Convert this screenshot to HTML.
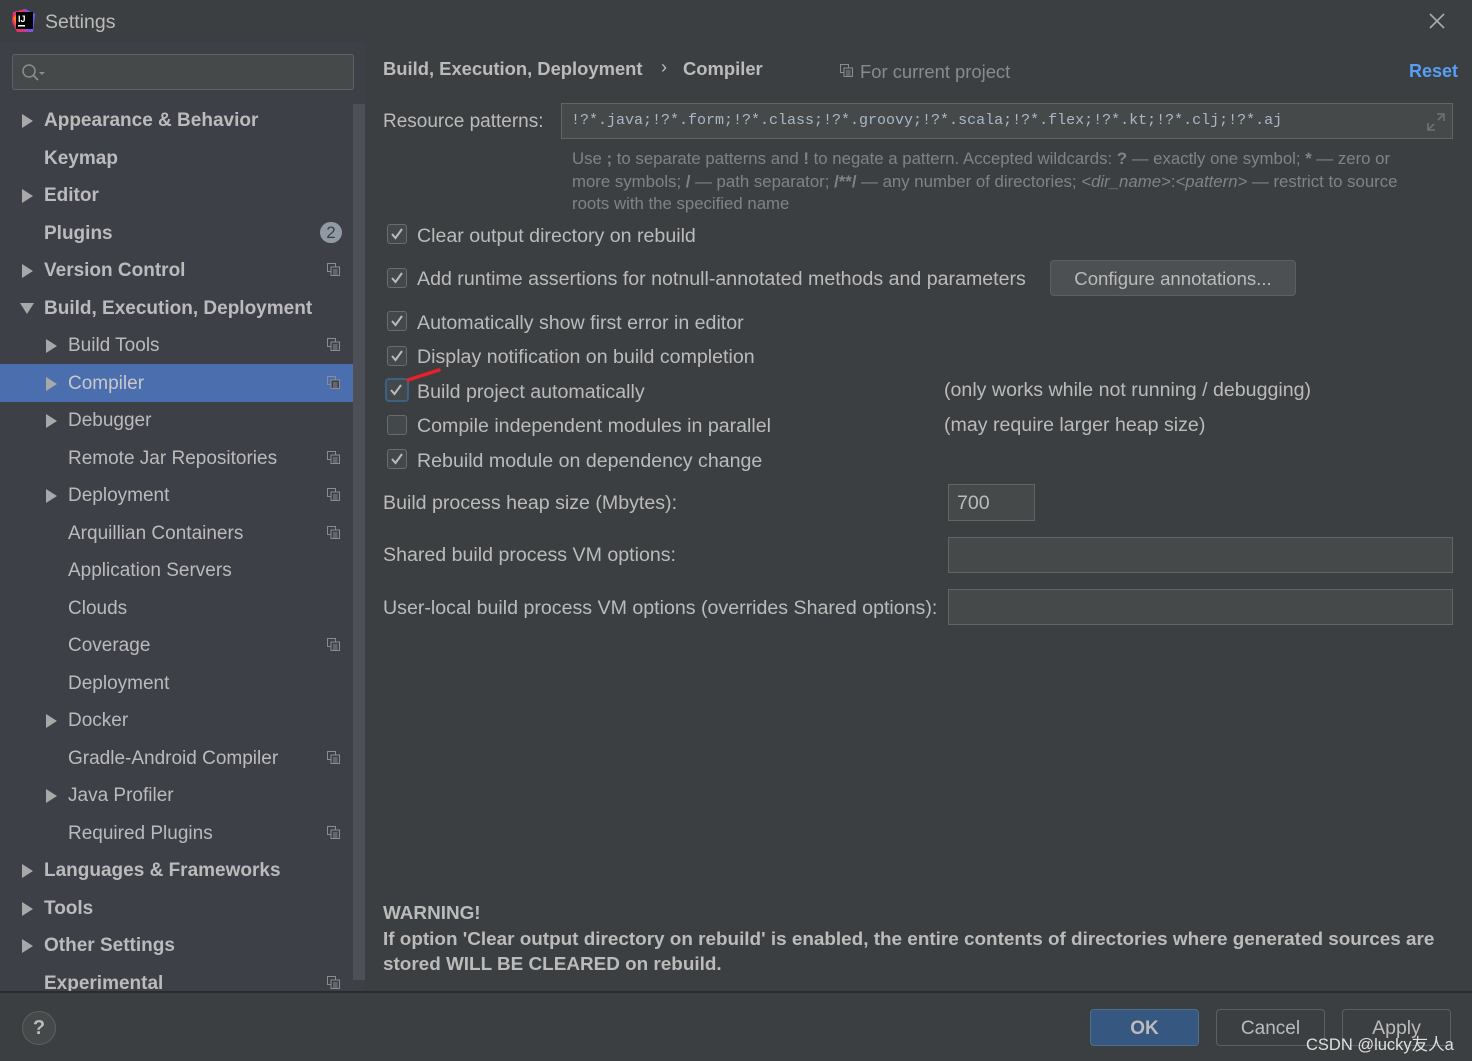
<!DOCTYPE html>
<html><head><meta charset="utf-8"><style>
*{margin:0;padding:0;box-sizing:border-box}
body{width:1472px;height:1061px;background:#3c3f41;font-family:"Liberation Sans","Noto Sans CJK SC",sans-serif;color:#bbbbbb;position:relative;overflow:hidden;font-size:18px}
.a{position:absolute;white-space:nowrap}
#side{position:absolute;left:0;top:42px;width:365px;height:950px;background:#3d4047;overflow:hidden}
.it{position:absolute;height:37px;line-height:39px;left:0;width:353px;font-size:19px}
.b{font-weight:bold}
.tri{position:absolute;top:13px;width:0;height:0;border-left:11px solid #a8a8a8;border-top:7px solid transparent;border-bottom:7px solid transparent}
.tri.d{border-left:7px solid transparent;border-right:7px solid transparent;border-top:11px solid #a8a8a8;border-bottom:0;top:14px}
.cb{position:absolute;width:20px;height:20px;border:1px solid #6b6b6b;border-radius:3px;background:#43494a}
.cb svg{position:absolute;left:2px;top:2px}
.inp{position:absolute;background:#45494a;border:1px solid #646464}
.btn{position:absolute;border:1px solid #5e6060;border-radius:4px;background:#4c5052;text-align:center;color:#bbbbbb}
.m{font-size:19.6px}
</style></head><body>
<svg class="a" style="left:11px;top:8px" width="26" height="26" viewBox="0 0 26 26"><polygon points="2,4 14,1 24,6 22,24 6,24 1,14" fill="#e2336d"/><polygon points="14,1 24,6 22,24 12,22" fill="#6b57ff"/><polygon points="2,10 8,4 6,20" fill="#fe7a16"/><rect x="5" y="4" width="17" height="17" fill="#000"/><text x="7" y="14" font-size="9" font-weight="bold" fill="#fff" font-family="Liberation Sans">IJ</text><rect x="7" y="17" width="7" height="1.5" fill="#fff"/></svg>
<div class="a" style="left:45px;top:11px;font-size:19.5px;color:#bbbbbb">Settings</div>
<svg class="a" style="left:1429px;top:13px" width="16" height="16"><path d="M1 1L15 15M15 1L1 15" stroke="#aaaaaa" stroke-width="1.6"/></svg>
<div id="side">
<div class="a" style="left:12px;top:12px;width:342px;height:36px;background:#45494a;border:1px solid #5e6165;border-radius:3px"></div>
<svg class="a" style="left:21px;top:21px" width="28" height="20"><circle cx="8" cy="8" r="6" stroke="#8a8d90" stroke-width="1.5" fill="none"/><path d="M12.5 12.5L17 17" stroke="#8a8d90" stroke-width="1.8"/><path d="M18 9h6l-3 3z" fill="#8a8d90"/></svg>
<div class="a" style="left:353px;top:62px;width:12px;height:876px;background:#4d5157"></div>
<div class="a" style="left:0;top:322px;width:353px;height:38px;background:#4b6eaf"></div>
</div>
<div style="position:absolute;left:0;top:0">
<div class="it b" style="top:101px"><div class="tri" style="left:22px"></div><span class="a" style="left:44px">Appearance &amp; Behavior</span></div>
<div class="it b" style="top:139px"><span class="a" style="left:44px">Keymap</span></div>
<div class="it b" style="top:176px"><div class="tri" style="left:22px"></div><span class="a" style="left:44px">Editor</span></div>
<div class="it b" style="top:214px"><span class="a" style="left:44px">Plugins</span><div class="a" style="left:320px;top:8px;width:22px;height:21px;border-radius:11px;background:#8f9aa5;color:#3d4047;font-size:17px;line-height:21px;text-align:center;font-weight:normal">2</div></div>
<div class="it b" style="top:251px"><div class="tri" style="left:22px"></div><span class="a" style="left:44px">Version Control</span></div>
<div class="it b" style="top:289px"><div class="tri d" style="left:20px"></div><span class="a" style="left:44px">Build, Execution, Deployment</span></div>
<div class="it" style="top:326px"><div class="tri" style="left:46px"></div><span class="a" style="left:68px">Build Tools</span></div>
<div class="it" style="top:364px;color:#c8c8c8"><div class="tri" style="left:46px"></div><span class="a" style="left:68px">Compiler</span></div>
<div class="it" style="top:401px"><div class="tri" style="left:46px"></div><span class="a" style="left:68px">Debugger</span></div>
<div class="it" style="top:439px"><span class="a" style="left:68px">Remote Jar Repositories</span></div>
<div class="it" style="top:476px"><div class="tri" style="left:46px"></div><span class="a" style="left:68px">Deployment</span></div>
<div class="it" style="top:514px"><span class="a" style="left:68px">Arquillian Containers</span></div>
<div class="it" style="top:551px"><span class="a" style="left:68px">Application Servers</span></div>
<div class="it" style="top:589px"><span class="a" style="left:68px">Clouds</span></div>
<div class="it" style="top:626px"><span class="a" style="left:68px">Coverage</span></div>
<div class="it" style="top:664px"><span class="a" style="left:68px">Deployment</span></div>
<div class="it" style="top:701px"><div class="tri" style="left:46px"></div><span class="a" style="left:68px">Docker</span></div>
<div class="it" style="top:739px"><span class="a" style="left:68px">Gradle-Android Compiler</span></div>
<div class="it" style="top:776px"><div class="tri" style="left:46px"></div><span class="a" style="left:68px">Java Profiler</span></div>
<div class="it" style="top:814px"><span class="a" style="left:68px">Required Plugins</span></div>
<div class="it b" style="top:851px"><div class="tri" style="left:22px"></div><span class="a" style="left:44px">Languages &amp; Frameworks</span></div>
<div class="it b" style="top:889px"><div class="tri" style="left:22px"></div><span class="a" style="left:44px">Tools</span></div>
<div class="it b" style="top:926px"><div class="tri" style="left:22px"></div><span class="a" style="left:44px">Other Settings</span></div>
<div class="it b" style="top:964px;height:27px;overflow:hidden"><span class="a" style="left:44px">Experimental</span></div>
</div>
<svg width="0" height="0" style="position:absolute"><defs><g id="cpi"><rect x="0.5" y="0.5" width="8" height="8" fill="none" stroke="#8a8d90"/><rect x="4" y="4" width="8.5" height="8.5" fill="#3d4047" stroke="#8a8d90"/><path d="M6 7h4.5M6 9h4.5M6 11h4.5" stroke="#8a8d90"/></g></defs></svg>
<svg class="a" style="left:327px;top:263px" width="14" height="14"><use href="#cpi"/></svg>
<svg class="a" style="left:327px;top:338px" width="14" height="14"><use href="#cpi"/></svg>
<svg class="a" style="left:327px;top:376px" width="14" height="14"><use href="#cpi"/></svg>
<svg class="a" style="left:327px;top:451px" width="14" height="14"><use href="#cpi"/></svg>
<svg class="a" style="left:327px;top:488px" width="14" height="14"><use href="#cpi"/></svg>
<svg class="a" style="left:327px;top:526px" width="14" height="14"><use href="#cpi"/></svg>
<svg class="a" style="left:327px;top:638px" width="14" height="14"><use href="#cpi"/></svg>
<svg class="a" style="left:327px;top:751px" width="14" height="14"><use href="#cpi"/></svg>
<svg class="a" style="left:327px;top:826px" width="14" height="14"><use href="#cpi"/></svg>
<svg class="a" style="left:327px;top:976px" width="14" height="14"><use href="#cpi"/></svg>

<div class="a b" style="left:383px;top:58px;font-size:18.4px">Build, Execution, Deployment</div>
<div class="a" style="left:661px;top:57px;font-size:18px">›</div>
<div class="a b" style="left:683px;top:58px;font-size:18.4px">Compiler</div>
<svg class="a" style="left:840px;top:64px" width="14" height="14"><use href="#cpi"/></svg>
<div class="a" style="left:860px;top:61px;font-size:18.4px;color:#888b8e">For current project</div>
<div class="a b" style="left:1409px;top:61px;font-size:18px;color:#589df6">Reset</div>

<div class="a" style="left:383px;top:111px;font-size:19px">Resource patterns:</div>
<div class="inp" style="left:561px;top:103px;width:892px;height:36px"></div>
<div class="a" style="left:571px;top:112px;font-family:'Liberation Mono','Noto Sans CJK SC',monospace;font-size:15px;color:#a9b7c6">!?*.java;!?*.form;!?*.class;!?*.groovy;!?*.scala;!?*.flex;!?*.kt;!?*.clj;!?*.aj</div>
<svg class="a" style="left:1426px;top:112px" width="20" height="20"><path d="M11 2h7v7M18 2l-6 6M9 18H2v-7M2 18l6-6" stroke="#6e7072" stroke-width="1.6" fill="none"/></svg>
<div class="a" style="left:572px;top:148px;font-size:16.8px;line-height:22.5px;color:#808386">Use <b>;</b> to separate patterns and <b>!</b> to negate a pattern. Accepted wildcards: <b>?</b> — exactly one symbol; <b>*</b> — zero or<br>more symbols; <b>/</b> — path separator; <b>/**/</b> — any number of directories; <i>&lt;dir_name&gt;</i>:<i>&lt;pattern&gt;</i> — restrict to source<br>roots with the specified name</div>

<div class="cb" style="left:387px;top:224px"><svg width="14" height="14"><path d="M2 7l3.5 4L12 2" stroke="#bbb" stroke-width="2" fill="none"/></svg></div>
<div class="a m" style="left:417px;top:225px">Clear output directory on rebuild</div>
<div class="cb" style="left:387px;top:268px"><svg width="14" height="14"><path d="M2 7l3.5 4L12 2" stroke="#bbb" stroke-width="2" fill="none"/></svg></div>
<div class="a m" style="left:417px;top:268px">Add runtime assertions for notnull-annotated methods and parameters</div>
<div class="btn" style="left:1050px;top:260px;width:246px;height:36px;line-height:35px;font-size:18.6px">Configure annotations...</div>
<div class="cb" style="left:387px;top:311px"><svg width="14" height="14"><path d="M2 7l3.5 4L12 2" stroke="#bbb" stroke-width="2" fill="none"/></svg></div>
<div class="a m" style="left:417px;top:312px">Automatically show first error in editor</div>
<div class="cb" style="left:387px;top:346px"><svg width="14" height="14"><path d="M2 7l3.5 4L12 2" stroke="#bbb" stroke-width="2" fill="none"/></svg></div>
<div class="a m" style="left:417px;top:346px">Display notification on build completion</div>
<div class="cb" style="left:385px;top:378px;width:24px;height:24px;border:2px solid #3d6185;border-radius:4px"><svg width="16" height="16"><path d="M2 8l3.5 4L12 3" stroke="#bbb" stroke-width="2" fill="none"/></svg></div>
<svg class="a" style="left:405px;top:366px" width="40" height="20"><path d="M3 14L34 4" stroke="#e8202a" stroke-width="3.5" stroke-linecap="round"/></svg>
<div class="a m" style="left:417px;top:381px">Build project automatically</div>
<div class="a m" style="left:944px;top:379px">(only works while not running / debugging)</div>
<div class="cb" style="left:387px;top:415px"></div>
<div class="a m" style="left:417px;top:415px">Compile independent modules in parallel</div>
<div class="a m" style="left:944px;top:414px">(may require larger heap size)</div>
<div class="cb" style="left:387px;top:449px"><svg width="14" height="14"><path d="M2 7l3.5 4L12 2" stroke="#bbb" stroke-width="2" fill="none"/></svg></div>
<div class="a m" style="left:417px;top:450px">Rebuild module on dependency change</div>

<div class="a m" style="left:383px;top:492px">Build process heap size (Mbytes):</div>
<div class="inp" style="left:948px;top:484px;width:87px;height:37px"></div>
<div class="a m" style="left:957px;top:492px">700</div>
<div class="a m" style="left:383px;top:544px">Shared build process VM options:</div>
<div class="inp" style="left:948px;top:537px;width:505px;height:36px"></div>
<div class="a m" style="left:383px;top:597px">User-local build process VM options (overrides Shared options):</div>
<div class="inp" style="left:948px;top:589px;width:505px;height:36px"></div>

<div class="a b" style="left:383px;top:901px;font-size:18.9px;line-height:25.5px">WARNING!<br>If option 'Clear output directory on rebuild' is enabled, the entire contents of directories where generated sources are<br>stored WILL BE CLEARED on rebuild.</div>

<div class="a" style="left:0;top:991px;width:1472px;height:2px;background:#2b2b2b"></div>
<div class="a" style="left:0;top:993px;width:1472px;height:68px;background:#3c3f41"></div>
<div class="a" style="left:22px;top:1011px;width:34px;height:34px;border-radius:17px;border:1px solid #5e6060;background:#45494a;text-align:center;line-height:32px;font-weight:bold;font-size:20px;color:#bbb">?</div>
<div class="btn" style="left:1090px;top:1009px;width:109px;height:37px;line-height:37px;background:#365880;border-color:#4c708c;font-weight:bold;font-size:19px">OK</div>
<div class="btn" style="left:1216px;top:1009px;width:109px;height:37px;line-height:37px;font-size:19px;background:#3c3f41">Cancel</div>
<div class="btn" style="left:1342px;top:1009px;width:109px;height:37px;line-height:37px;font-size:19.5px;background:#3c3f41">Apply</div>
<div class="a" style="left:1306px;top:1031px;font-size:16.5px;color:#e0e0e0">CSDN @lucky友人a</div>
</body></html>
